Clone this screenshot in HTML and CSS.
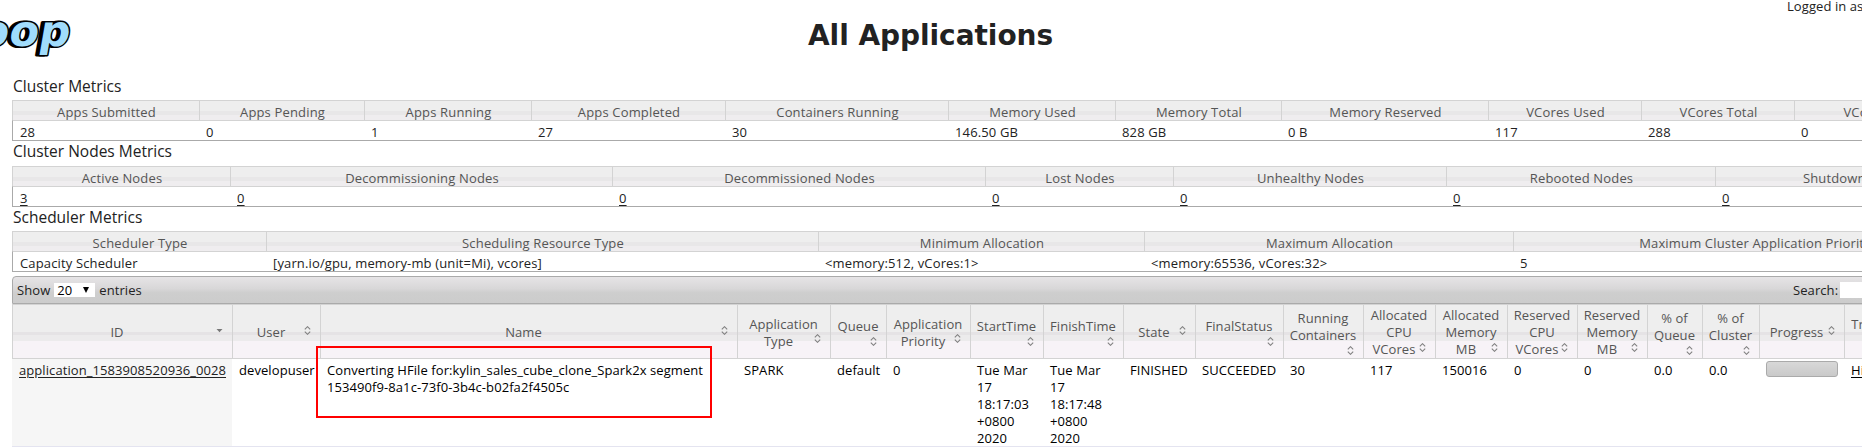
FILE: index.html
```
<!DOCTYPE html>
<html lang="en">
<head>
<meta charset="utf-8">
<title>All Applications</title>
<link rel="stylesheet" href="styles.css">
</head>
<body>
<header class="top">
  <svg class="logo" width="80" height="64" viewBox="0 0 80 64" role="img" aria-label="hadoop">
    <g transform="translate(68 0) skewX(-10)" class="logo-text">
      <text class="logo-shadow" x="6" y="46" text-anchor="end">oop</text>
      <text class="logo-face" x="9" y="46" text-anchor="end">oop</text>
    </g>
  </svg>
  <h1 class="title">All Applications</h1>
  <div class="login">Logged in as</div>
</header>
<main class="content">
  <h3 class="caption">Cluster Metrics</h3>
  <div class="metrics cluster">
    <div class="h">Apps Submitted</div><div class="h">Apps Pending</div><div class="h">Apps Running</div><div class="h">Apps Completed</div><div class="h">Containers Running</div><div class="h">Memory Used</div><div class="h">Memory Total</div><div class="h">Memory Reserved</div><div class="h">VCores Used</div><div class="h">VCores Total</div><div class="h">VCores Reserved</div>
    <div class="v">28</div><div class="v">0</div><div class="v">1</div><div class="v">27</div><div class="v">30</div><div class="v">146.50 GB</div><div class="v">828 GB</div><div class="v">0 B</div><div class="v">117</div><div class="v">288</div><div class="v">0</div>
  </div>
  <h3 class="caption">Cluster Nodes Metrics</h3>
  <div class="metrics nodes">
    <div class="h">Active Nodes</div><div class="h">Decommissioning Nodes</div><div class="h">Decommissioned Nodes</div><div class="h">Lost Nodes</div><div class="h">Unhealthy Nodes</div><div class="h">Rebooted Nodes</div><div class="h">Shutdown Nodes</div>
    <div class="v"><a>3</a></div><div class="v"><a>0</a></div><div class="v"><a>0</a></div><div class="v"><a>0</a></div><div class="v"><a>0</a></div><div class="v"><a>0</a></div><div class="v"><a>0</a></div>
  </div>
  <h3 class="caption">Scheduler Metrics</h3>
  <div class="metrics scheduler">
    <div class="h">Scheduler Type</div><div class="h">Scheduling Resource Type</div><div class="h">Minimum Allocation</div><div class="h">Maximum Allocation</div><div class="h">Maximum Cluster Application Priority</div>
    <div class="v">Capacity Scheduler</div><div class="v">[yarn.io/gpu, memory-mb (unit=Mi), vcores]</div><div class="v">&lt;memory:512, vCores:1&gt;</div><div class="v">&lt;memory:65536, vCores:32&gt;</div><div class="v">5</div>
  </div>
  <div class="toolbar">
    <div class="length">Show <span class="select">20<span class="arrow"></span></span> entries</div>
    <div class="search">Search: <span class="input"></span></div>
  </div>
  <svg class="defs" width="0" height="0"><defs>
    <symbol id="sort" viewBox="0 0 7 9"><path d="M.8 3.400 3.500.7 6.200 3.400M.8 5.600 3.500 8.300 6.200 5.600" fill="none" stroke="#808080" stroke-width="1.100"/></symbol>
    <symbol id="desc" viewBox="0 0 7 9"><path d="M.5 3h6L3.500 6.200Z" fill="#777"/></symbol>
  </defs></svg>
  <div class="apps">
    <div class="th"><div class="last"><span>ID</span><svg><use href="#desc"/></svg></div></div>
    <div class="th"><div class="last"><span>User</span><svg><use href="#sort"/></svg></div></div>
    <div class="th"><div class="last"><span>Name</span><svg><use href="#sort"/></svg></div></div>
    <div class="th"><div>Application</div><div class="last"><span>Type</span><svg><use href="#sort"/></svg></div></div>
    <div class="th"><div>Queue</div><div class="under"><svg><use href="#sort"/></svg></div></div>
    <div class="th"><div>Application</div><div class="last"><span>Priority</span><svg><use href="#sort"/></svg></div></div>
    <div class="th"><div>StartTime</div><div class="under"><svg><use href="#sort"/></svg></div></div>
    <div class="th"><div>FinishTime</div><div class="under"><svg><use href="#sort"/></svg></div></div>
    <div class="th"><div class="last"><span>State</span><svg><use href="#sort"/></svg></div></div>
    <div class="th"><div>FinalStatus</div><div class="under"><svg><use href="#sort"/></svg></div></div>
    <div class="th"><div>Running<br>Containers</div><div class="under"><svg><use href="#sort"/></svg></div></div>
    <div class="th"><div>Allocated<br>CPU</div><div class="last"><span>VCores</span><svg><use href="#sort"/></svg></div></div>
    <div class="th"><div>Allocated<br>Memory</div><div class="last"><span>MB</span><svg><use href="#sort"/></svg></div></div>
    <div class="th"><div>Reserved<br>CPU</div><div class="last"><span>VCores</span><svg><use href="#sort"/></svg></div></div>
    <div class="th"><div>Reserved<br>Memory</div><div class="last"><span>MB</span><svg><use href="#sort"/></svg></div></div>
    <div class="th"><div>% of<br>Queue</div><div class="under"><svg><use href="#sort"/></svg></div></div>
    <div class="th"><div>% of<br>Cluster</div><div class="under"><svg><use href="#sort"/></svg></div></div>
    <div class="th"><div class="last"><span>Progress</span><svg><use href="#sort"/></svg></div></div>
    <div class="th"><div>Tracking</div><div class="last"><span>UI</span><svg><use href="#sort"/></svg></div></div>
    <div class="td sorted"><a>application_1583908520936_0028</a></div>
    <div class="td user">developuser</div>
    <div class="td name">Converting HFile for:kylin_sales_cube_clone_Spark2x segment<br>153490f9-8a1c-73f0-3b4c-b02fa2f4505c<div class="highlight"></div></div>
    <div class="td">SPARK</div>
    <div class="td">default</div>
    <div class="td">0</div>
    <div class="td">Tue Mar<br>17<br>18:17:03<br>+0800<br>2020</div>
    <div class="td">Tue Mar<br>17<br>18:17:48<br>+0800<br>2020</div>
    <div class="td">FINISHED</div>
    <div class="td">SUCCEEDED</div>
    <div class="td">30</div>
    <div class="td">117</div>
    <div class="td">150016</div>
    <div class="td">0</div>
    <div class="td">0</div>
    <div class="td">0.0</div>
    <div class="td">0.0</div>
    <div class="td"><div class="progress"></div></div>
    <div class="td"><a>History</a></div>
  </div>
</main>
</body>
</html>
```
FILE: styles.css
```
* { box-sizing: border-box; }
body {
  margin: 0;
  width: 1862px;
  height: 447px;
  overflow: hidden;
  background: #fff;
  color: #222;
  font: 13px/17px "Open Sans", "Noto Sans", sans-serif;
  letter-spacing: .08px;
  white-space: nowrap;
}
a { text-decoration: underline; text-underline-offset: 2px; text-decoration-thickness: 1px; }
.top {
  display: grid;
  grid-template-columns: 808px 979px 75px;
  height: 77px;
}
.logo { display: block; }
.logo-text {
  font: bold 43px "DejaVu Sans", sans-serif;
  letter-spacing: .5px;
  stroke-linejoin: round;
  paint-order: stroke;
}
.logo-shadow { fill: #000; stroke: #000; stroke-width: 3px; }
.logo-face { fill: #a0dcfc; stroke: #000; stroke-width: 3px; }
.title {
  margin: 19px 0 0;
  font: bold 28px/34px "DejaVu Sans", sans-serif;
  letter-spacing: -.05px;
}
.login { line-height: 13px; }
.content { padding-left: 12px; }
.caption {
  margin: 0;
  height: 25px;
  padding: 1px 0 0 1px;
  font-size: 15.500px;
  font-weight: normal;
  line-height: 18px;
  letter-spacing: 0;
}
.nodes + .caption { height: 24px; }
.caption:first-child { height: 23px; padding-top: 0; line-height: 19px; }
.metrics {
  display: grid;
  grid-template-rows: 20px 21px;
  width: 1983px;
}
.cluster { grid-template-columns: 187px 165px 167px 194px 223px 167px 166px 207px 153px 153px 201px; }
.nodes { grid-template-columns: 218px 382px 373px 188px 273px 269px 280px; }
.scheduler { grid-template-columns: 254px 552px 326px 369px 482px; }
.h {
  border-top: 1px solid #d3d3d3;
  border-left: 1px solid #d3d3d3;
  padding-left: 1px;
  background: linear-gradient(#eee 0 10px, #e8e7e8 10px 14px, #efedef 14px);
  color: #555;
  text-align: center;
  line-height: 22px;
  letter-spacing: .16px;
}
.v {
  border-top: 1px solid #d3d3d3;
  border-bottom: 1px solid #aaa;
  padding-left: 7px;
  line-height: 22px;
  letter-spacing: .14px;
}
.h + .v { border-left: 1px solid #aaa; }
.toolbar {
  display: flex;
  justify-content: space-between;
  width: 1983px;
  height: 28px;
  margin-top: 4px;
  padding: 0 4px;
  border: 1px solid #aaa;
  border-radius: 4px 4px 0 0;
  background: linear-gradient(#e6e4e6 0, #d8d7d8 45%, #cecece 60%, #ccc);
  line-height: 26px;
}
.length, .search { display: flex; align-items: center; gap: 4px; }
.search { width: 197px; gap: 2px; }
.select {
  display: flex;
  align-items: center;
  justify-content: space-between;
  width: 41px;
  height: 14px;
  padding: 0 6px 0 3px;
  background: #fff;
  color: #000;
  line-height: 14px;
}
.arrow { border: 3px solid transparent; border-top: 6px solid #000; border-bottom: 0; }
.input { width: 140px; height: 16px; background: #fff; }
.defs { display: block; }
.apps {
  display: grid;
  grid-template-columns: 220px 88px 417px 93px 56px 84px 73px 80px 72px 88px 80px 72px 72px 70px 70px 55px 57px 85px 66px;
  grid-template-rows: 55px 88px;
}
.th {
  display: flex;
  flex-direction: column;
  justify-content: center;
  border: solid #d3d3d3;
  border-width: 1px 0 1px 1px;
  padding: 2px 1px 0 0;
  background: linear-gradient(#eee 0 27px, #e5e3e5 27px 30px, #ecebec 30px 36px, #f7f3f7 36px);
  color: #555;
  text-align: center;
}
.last { display: flex; align-items: center; padding-right: 8px; }
.last span { flex: 1; padding-left: 5px; }
.th svg { display: block; flex: none; width: 7px; height: 9px; }
.last svg { margin-bottom: 5px; }
.under { display: flex; justify-content: flex-end; height: 12px; padding: 2px 8px 0 0; }
.td {
  position: relative;
  padding: 3px 0 0 7px;
  border-bottom: 1px solid #e4e4f0;
  color: #000;
}
.sorted { background: #f6f6f6; color: #222; }
.highlight {
  position: absolute;
  left: -4px;
  top: -13px;
  width: 396px;
  height: 72px;
  border: 2px solid #f00;
}
.progress {
  width: 72px;
  height: 16px;
  margin-top: -1px;
  border: 1px solid #aaa;
  border-radius: 3px;
  background: linear-gradient(#d8d8d8, #c9c9c9);
}
```
